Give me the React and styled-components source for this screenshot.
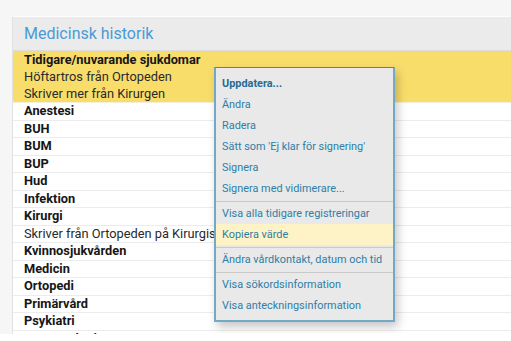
import styled, { createGlobalStyle } from "styled-components";

const Global = createGlobalStyle`
  html, body {
    margin: 0;
    background: #fff;
    font-family: Roboto, "Liberation Sans", sans-serif;
    overflow: hidden;
  }
`;

const Page = styled.div`
  padding: 16px 0 0 12px;
  height: 334px;
  box-sizing: border-box;
  position: relative;
  background: #f6f6f6;
  overflow: hidden;
`;

const Panel = styled.div`
  width: 540px;
  background: #fff;
  border-left: 1px solid #e2e2e2;
  border-top: 1px solid #fdfdfd;
`;

const Header = styled.div`
  height: 33px;
  background: #ebebeb;
  border-bottom: 1px solid #dcdcdc;
  display: flex;
  align-items: center;
  padding-left: 11px;
  font-size: 16px;
  color: #4a9ad6;
`;

const Highlight = styled.div`
  background: #f9dd6b;
  border-bottom: 1px solid #f4efd8;
`;

const Row = styled.div`
  box-sizing: border-box;
  height: ${(p) => (p.$plain ? "17px" : "17.5px")};
  line-height: ${(p) => (p.$plain ? "17px" : "16.5px")};
  padding-left: 11px;
  font-size: 12.8px;
  font-weight: ${(p) => (p.$bold ? 700 : 400)};
  color: ${(p) => (p.$bold ? "#161616" : "#2a2a2a")};
  border-bottom: ${(p) => (p.$plain ? "none" : "1px solid #ececec")};
  white-space: nowrap;
`;

const Menu = styled.div`
  position: absolute;
  left: 214px;
  top: 67px;
  width: 177px;
  background: #e9e9e9;
  border: 2px solid #72a9c7;
  border-top: 1px solid #4f86a7;
  padding: 5px 0 4px;
  box-shadow: 3px 5px 9px rgba(0, 0, 0, 0.22);
`;

const Item = styled.div`
  height: 21px;
  line-height: 21px;
  padding-left: 6px;
  font-size: 10.9px;
  color: ${(p) => (p.$bold ? "#276c93" : "#2f7ea6")};
  font-weight: ${(p) => (p.$bold ? 700 : 400)};
  background: ${(p) => (p.$active ? "#fdf3c7" : "transparent")};
  white-space: nowrap;
`;

const Sep = styled.div`
  height: 1px;
  background: #c9c9c9;
  margin: 1.5px 0;
`;

const rows = [
  ["Anestesi", true],
  ["BUH", true],
  ["BUM", true],
  ["BUP", true],
  ["Hud", true],
  ["Infektion", true],
  ["Kirurgi", true],
  ["Skriver från Ortopeden på Kirurgiska kliniken", false],
  ["Kvinnosjukvården", true],
  ["Medicin", true],
  ["Ortopedi", true],
  ["Primärvård", true],
  ["Psykiatri", true],
  ["Reumatologi", true],
];

export default function App() {
  return (
    <>
      <Global />
      <Page>
        <Panel>
          <Header>Medicinsk historik</Header>
          <Highlight>
            <Row $plain $bold>Tidigare/nuvarande sjukdomar</Row>
            <Row $plain>Höftartros från Ortopeden</Row>
            <Row $plain>Skriver mer från Kirurgen</Row>
          </Highlight>
          {rows.map(([name, bold]) => (
            <Row key={name} $bold={bold}>{name}</Row>
          ))}
        </Panel>
        <Menu>
          <Item $bold>Uppdatera...</Item>
          <Item>Ändra</Item>
          <Item>Radera</Item>
          <Item>Sätt som 'Ej klar för signering'</Item>
          <Item>Signera</Item>
          <Item>Signera med vidimerare...</Item>
          <Sep />
          <Item>Visa alla tidigare registreringar</Item>
          <Item $active>Kopiera värde</Item>
          <Sep />
          <Item>Ändra vårdkontakt, datum och tid</Item>
          <Sep />
          <Item>Visa sökordsinformation</Item>
          <Item>Visa anteckningsinformation</Item>
        </Menu>
      </Page>
    </>
  );
}
